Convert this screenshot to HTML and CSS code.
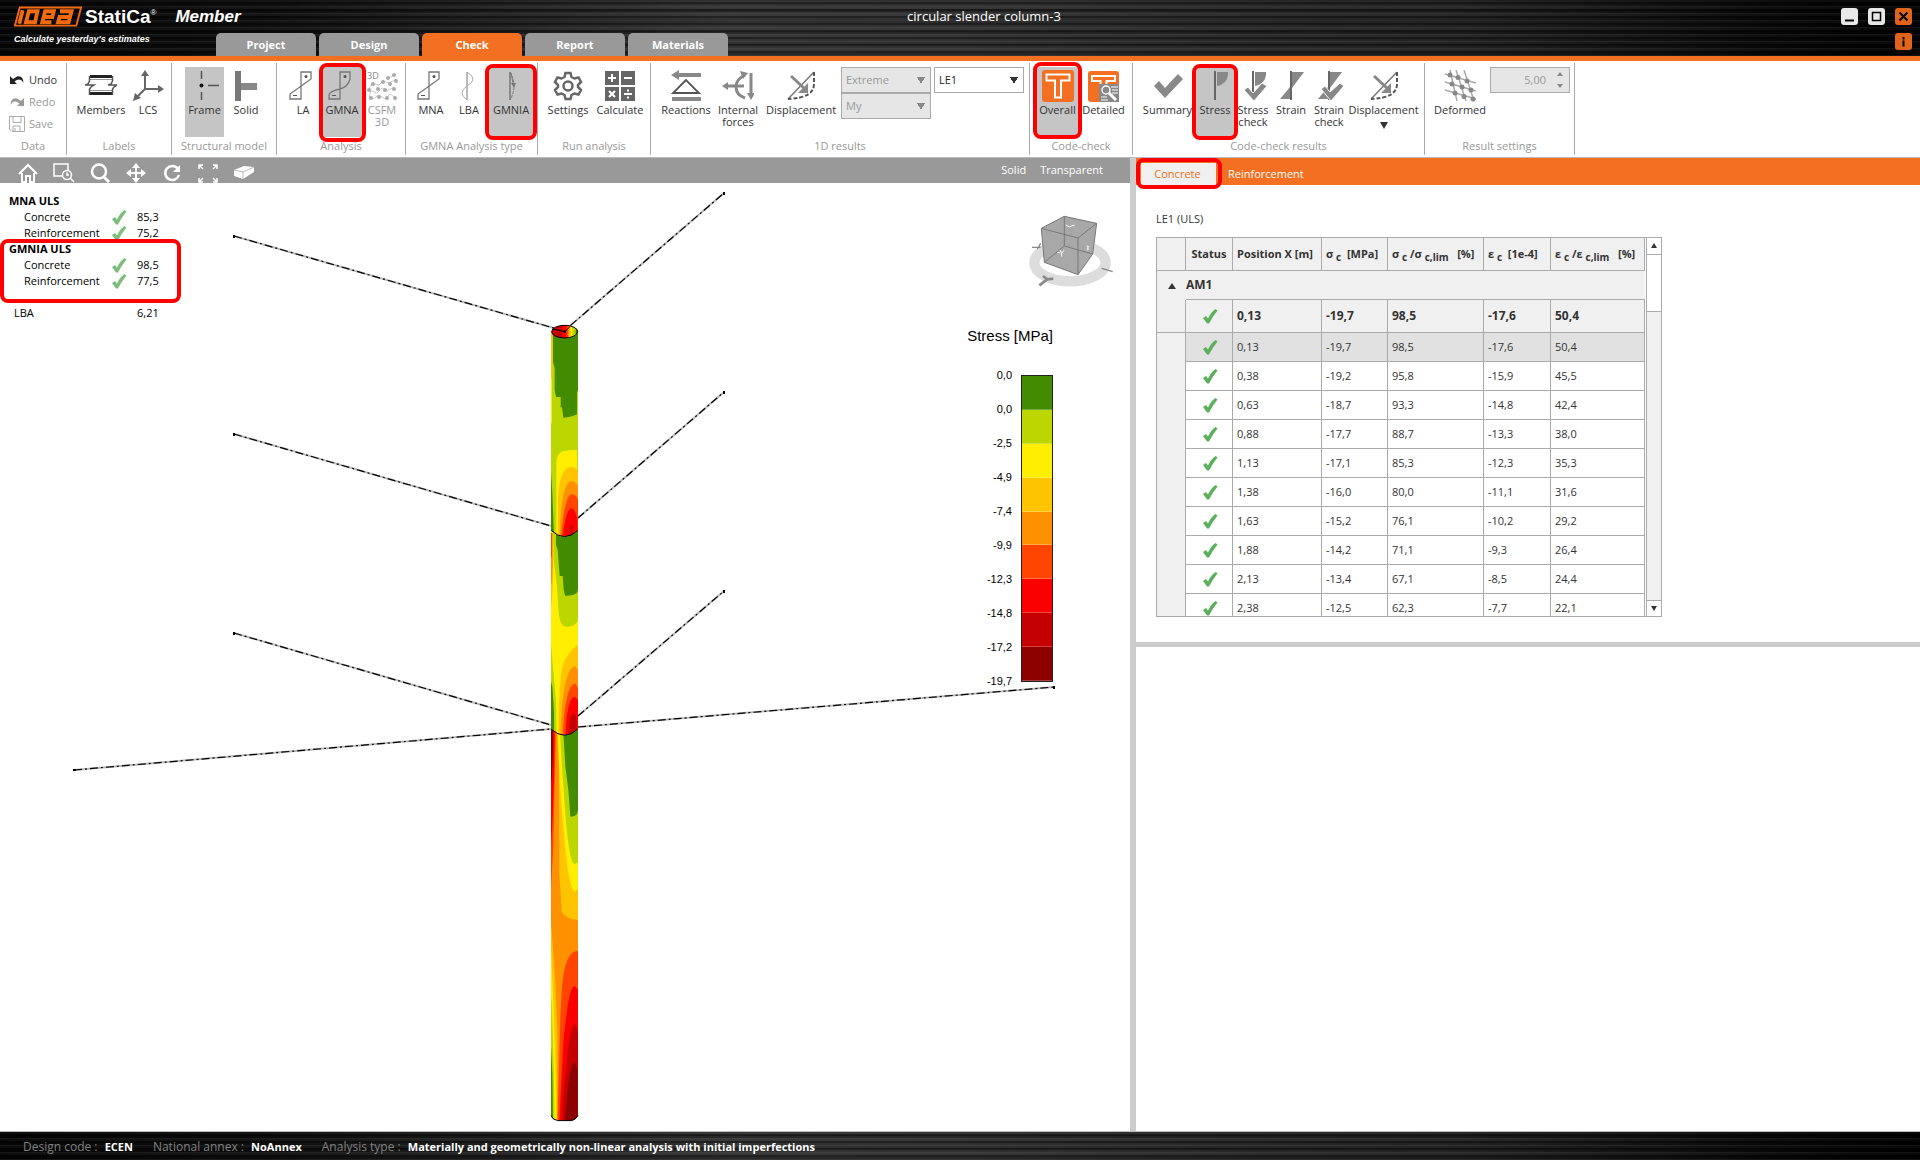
FILE: index.html
```html
<!DOCTYPE html>
<html lang="en">
<head>
<meta charset="utf-8">
<title>IDEA StatiCa Member - circular slender column-3</title>
<link rel="stylesheet" href="styles.css">
</head>
<body>
<svg class="defs" aria-hidden="true">
  <symbol id="tick" viewBox="0 0 16 16"><path d="M1 10 L4 8 L6 10.500 Q9 4 13.500 1 L15.500 2.500 Q11 8 7 15.500 L5 15.500 Z" fill="#5cb05c"/></symbol>
  <symbol id="linear" viewBox="0 0 32 32"><path d="M14 2H24V9L3 24V29H14Z" fill="none" stroke="#777" stroke-width="1.300"/><circle cx="19" cy="6.500" r="1.500" fill="#555"/><path d="M6 25.500h4" stroke="#555"/></symbol>
  <symbol id="disp" viewBox="0 0 32 32"><path d="M3 29 29 2" stroke="#777" stroke-width="1.500"/><path d="M29 2V14Q29 28 3 29" fill="none" stroke="#555" stroke-width="2" stroke-dasharray="4 2"/><path d="M6 6 21 20" stroke="#888" stroke-width="3"/><path d="M23 13v10H13z" fill="#888"/></symbol>
  <symbol id="stress" viewBox="0 0 32 32"><path d="M16 1v29" stroke="#666" stroke-width="2"/><path d="M18 2H29V5Q28 14 18 16Z" fill="#888"/></symbol>
  <symbol id="strain" viewBox="0 0 32 32"><path d="M16 1v29" stroke="#666" stroke-width="2"/><path d="M17 2H29L17 18ZM5 29H15V17Z" fill="#888"/></symbol>
</svg>

<header class="titlebar">
  <div class="brand">
    <div class="brand-line">
      <svg class="logo" width="72" height="22" viewBox="0 0 72 22" role="img" aria-label="IDEA">
        <path d="M6 1H70L65 20H1Z" fill="none" stroke="#f26a10" stroke-width="2"/>
        <g fill="none" stroke="#f26a10" stroke-width="4"><path d="M9 4 5.500 18"/><path d="M12.500 16.500 15.500 5H24.500L22 16.500Z"/><path d="M30 11H40L41.500 5H32.500L29.500 16.500H39"/><path d="M48 5H60L57 16.500H46L47.500 11H58"/></g>
      </svg>
      <span class="brand-name">StatiCa<sup>®</sup></span>
      <span class="brand-app">Member</span>
    </div>
    <div class="tagline">Calculate yesterday's estimates</div>
  </div>
  <nav class="tabs">
    <button class="tab">Project</button>
    <button class="tab">Design</button>
    <button class="tab active">Check</button>
    <button class="tab">Report</button>
    <button class="tab">Materials</button>
  </nav>
  <h1 class="doc-title">circular slender column-3</h1>
  <div class="window-buttons">
    <button class="win" aria-label="Minimize"><svg width="17" height="17"><path d="M4 12.500h9" stroke="#000" stroke-width="2"/></svg></button>
    <button class="win" aria-label="Maximize"><svg width="17" height="17"><path d="M4.500 4.500h8v8h-8z" fill="none" stroke="#000" stroke-width="1.500"/></svg></button>
    <button class="win orange" aria-label="Close"><svg width="17" height="17"><path d="m4.500 4.500 8 8m0-8-8 8" stroke="#000" stroke-width="2"/></svg></button>
    <button class="win orange info" aria-label="Info"><svg width="17" height="17"><path d="M8.500 4v2.500M8.500 7.500v6" stroke="#000" stroke-width="2"/></svg></button>
  </div>
</header>

<section class="ribbon">
  <div class="group g-data">
    <div class="stack">
      <button class="cmd"><svg width="16" height="14"><path d="M1 3v8h7L5.500 8.500Q11 4 14.500 10Q14 2 8 3.500L4 6Z" fill="#222"/></svg>Undo</button>
      <button class="cmd off" disabled><svg width="16" height="14"><path d="M15 3v8H8l2.500-2.500Q5 4 1.500 10Q2 2 8 3.500L12 6Z" fill="#999"/></svg>Redo</button>
      <button class="cmd off" disabled><svg width="16" height="16"><path d="M.5.5h15v15H3l-2.500-2.500zM4 .5v6h8v-6M4 15v-5h7v5M6 12v3" fill="none" stroke="#aaa"/></svg>Save</button>
    </div>
    <h2>Data</h2>
  </div>
  <div class="group g-labels">
    <div class="row">
      <button class="tool"><svg width="32" height="32"><path d="M5 6.500h22M5 23.500h22" stroke="#222" stroke-width="3"/><path d="M5 9.500h22M5 20.500h22" stroke="#999"/><path d="M4.500 6v5l-1.500 3-3 1h9l-3 2-1.500 2v6M27.500 6v5l-1.500 3-3 1h9l-3 2-1.500 2v6" fill="none" stroke="#555" stroke-width="1.500"/></svg><span>Members</span></button>
      <button class="tool"><svg width="32" height="32"><path d="M13 3v16h15M13 19 3 29" fill="none" stroke="#666" stroke-width="2"/><path d="M13 0l-4 6h8zM32 19l-6-4v8zM1 31l2-8 6 5z" fill="#666"/></svg><span>LCS</span></button>
    </div>
    <h2>Labels</h2>
  </div>
  <div class="group g-model">
    <div class="row">
      <button class="tool on"><svg width="32" height="32"><path d="M12.500 1v8M12.500 22v8M19 15.500h11" stroke="#555" stroke-width="1.500"/><circle cx="12.500" cy="15.500" r="2" fill="#111"/></svg><span>Frame</span></button>
      <button class="tool"><svg width="32" height="32"><path d="M5 1h6v30H5z" fill="#777"/><path d="M11 13h16v7H11z" fill="#888"/></svg><span>Solid</span></button>
    </div>
    <h2>Structural model</h2>
  </div>
  <div class="group g-analysis">
    <div class="row">
      <button class="tool"><svg width="32" height="32"><use href="#linear"/></svg><span>LA</span></button>
      <button class="tool on marked mark-a"><svg width="32" height="32"><path d="M14 2H24V9Q22 17 14 19Q4 21 3 25V29H14Z" fill="none" stroke="#777" stroke-width="1.300"/><circle cx="19" cy="6.500" r="1.500" fill="#555"/><path d="M6 25.500h4" stroke="#555"/></svg><span>GMNA</span></button>
      <button class="tool off" disabled><svg width="32" height="32"><text x="1" y="9" class="icon-text">3D</text><path d="M21 9l7-4M3 18l4-4 6 1 4-4 6 2 6-3M3 27l2-6 6 2 5-5 5 3 7-4M7 29l6-4 6 4 5-5 6 4" fill="none" stroke="#ccc"/><g fill="#aaa"><circle cx="22" cy="8" r="2"/><circle cx="28" cy="5" r="2"/><circle cx="7" cy="14" r="2"/><circle cx="17" cy="12" r="2"/><circle cx="24" cy="14" r="2"/><circle cx="30" cy="11" r="2"/><circle cx="3" cy="20" r="2"/><circle cx="12" cy="19" r="2"/><circle cx="19" cy="20" r="2"/><circle cx="28" cy="19" r="2"/><circle cx="5" cy="28" r="2"/><circle cx="13" cy="27" r="2"/><circle cx="21" cy="28" r="2"/><circle cx="29" cy="28" r="2"/></g></svg><span>CSFM<br>3D</span></button>
    </div>
    <h2>Analysis</h2>
  </div>
  <div class="group g-gmna">
    <div class="row">
      <button class="tool"><svg width="32" height="32"><use href="#linear"/></svg><span>MNA</span></button>
      <button class="tool"><svg width="32" height="32"><path d="M14 2v28" stroke="#777"/><path d="M14 2Q26 9 14 16Q4 23 14 30" fill="none" stroke="#aaa"/></svg><span>LBA</span></button>
      <button class="tool on marked mark-b"><svg width="32" height="32"><path d="M15 2v28" stroke="#777" stroke-width="1.500"/><path d="M15 2Q23 16 15 30" fill="none" stroke="#777" stroke-dasharray="3 1"/><path d="M16 3l2 10" stroke="#777"/><path d="M16 13h5l-2 5z" fill="#777"/></svg><span>GMNIA</span></button>
    </div>
    <h2>GMNA Analysis type</h2>
  </div>
  <div class="group g-run">
    <div class="row">
      <button class="tool"><svg width="32" height="32" fill="none" stroke="#666" stroke-width="2.500"><path d="M13.500 3h5l1 4 3 1.500 4-1 2.500 4.500-3 3v2l3 3-2.500 4.500-4-1-3 1.500-1 4h-5l-1-4-3-1.500-4 1L3 20l3-3v-2l-3-3 2.500-4.500 4 1 3-1.500z"/><circle cx="16" cy="16" r="4.500"/></svg><span>Settings</span></button>
      <button class="tool"><svg width="32" height="32"><path d="M1 1h14v14H1zM17 1h14v14H17zM1 17h14v14H1zM17 17h14v14H17z" fill="#666"/><path d="M4 8h8M8 4v8M20 8h8M5 21l6 6m0-6-6 6M20 24h8" stroke="#fff" stroke-width="2"/><path d="M23 19.500h2v2h-2zM23 26.500h2v2h-2z" fill="#fff"/></svg><span>Calculate</span></button>
    </div>
    <h2>Run analysis</h2>
  </div>
  <div class="group g-1d">
    <div class="row">
      <button class="tool"><svg width="32" height="32"><path d="M1 5l8-5v3h22v4H9v3zM2 27h29v4H2z" fill="#888"/><path d="M16 10 3 23h26z" fill="none" stroke="#555" stroke-width="1.800"/></svg><span>Reactions</span></button>
      <button class="tool"><svg width="32" height="32"><path d="M5 16h17M29 3v23" stroke="#888" stroke-width="3"/><path d="M23 5Q14 9 14 17Q14 25 23 28" fill="none" stroke="#888" stroke-width="3"/><path d="M0 16l6-4v8zM26 3l-8-2 3 8zM29 30l-4-7h8z" fill="#888"/></svg><span>Internal<br>forces</span></button>
      <button class="tool"><svg width="32" height="32"><use href="#disp"/></svg><span>Displacement</span></button>
      <div class="selects">
        <select aria-label="Result position" disabled><option>Extreme</option></select>
        <select aria-label="Result component" disabled><option>My</option></select>
      </div>
      <div class="selects"><select aria-label="Load case"><option>LE1</option></select></div>
    </div>
    <h2>1D results</h2>
  </div>
  <div class="group g-code">
    <div class="row">
      <button class="tool on marked mark-c"><svg width="34" height="32"><rect x="1" width="32" height="32" rx="3" fill="#f36f21"/><path d="M5.500 4.500h23v6h-8.500v17h-6v-17H5.500z" fill="none" stroke="#fff" stroke-width="2"/></svg><span>Overall</span></button>
      <button class="tool"><svg width="34" height="32"><rect x="1" y="1" width="31" height="31" rx="3" fill="#f36f21"/><path d="M5 6h23v5H19.500v16h-6V11H5z" fill="none" stroke="#fff" stroke-width="2"/><path d="M12 14h20v18H12z" fill="#888"/><path d="M24 17h7M25 20h6M25 23h6M14 27h6M14 30h7" stroke="#fff"/><circle cx="19" cy="20" r="4" fill="none" stroke="#fff" stroke-width="1.500"/><path d="M22 23l7 7" stroke="#fff" stroke-width="3"/></svg><span>Detailed</span></button>
    </div>
    <h2>Code-check</h2>
  </div>
  <div class="group g-results">
    <div class="row">
      <button class="tool"><svg width="32" height="32"><path d="M2 16l5-5 6 7L26 4l5 5L13 28z" fill="#888"/></svg><span>Summary</span></button>
      <button class="tool on marked mark-d"><svg width="32" height="32"><use href="#stress"/></svg><span>Stress</span></button>
      <button class="tool"><svg width="32" height="32"><use href="#stress"/><path d="M7 20l4-3 5 6L25 13l5 3L17 31z" fill="#888" stroke="#fff"/></svg><span>Stress<br>check</span></button>
      <button class="tool"><svg width="32" height="32"><use href="#strain"/></svg><span>Strain</span></button>
      <button class="tool"><svg width="32" height="32"><use href="#strain"/><path d="M8 19l4-3 5 6L27 13l4 3L18 31z" fill="#888" stroke="#fff"/></svg><span>Strain<br>check</span></button>
      <button class="tool"><svg width="32" height="32"><use href="#disp"/></svg><span>Displacement</span><svg class="more" width="8" height="7"><path d="M0 0h8L4 7z" fill="#333"/></svg></button>
    </div>
    <h2>Code-check results</h2>
  </div>
  <div class="group g-settings">
    <div class="row">
      <button class="tool"><svg width="34" height="32"><path d="M2 4 33 13M2 12 33 21M2 20 33 29M7 0 14 31M13 0 23 31M21 0 31 31" stroke="#aaa" stroke-width="1.500"/><g fill="#888"><circle cx="7" cy="5" r="2.500"/><circle cx="15" cy="7.500" r="2.500"/><circle cx="24" cy="11" r="2.500"/><circle cx="9" cy="14" r="2.500"/><circle cx="19" cy="17" r="2.500"/><circle cx="28" cy="20" r="2.500"/><circle cx="12" cy="23" r="2.500"/><circle cx="21" cy="26.500" r="2.500"/><circle cx="30" cy="29" r="2.500"/></g></svg><span>Deformed</span></button>
      <div class="spin"><input type="text" aria-label="Deformation scale" value="5,00" disabled><svg width="8" height="20"><path d="M1 6 4 2l3 4zM1 14h6l-3 4z" fill="#888"/></svg></div>
    </div>
    <h2>Result settings</h2>
  </div>
</section>

<main class="work">
  <section class="view">
    <div class="viewbar">
      <button aria-label="Home"><svg width="22" height="20" fill="none" stroke="#fff" stroke-width="2"><path d="M2 11 11 2l9 9M5 10v9h4v-6h4v6h4v-9"/></svg></button>
      <button aria-label="Zoom window"><svg width="22" height="20" fill="none" stroke="#fff"><path d="M9 13H1V1h14v6" stroke-width="1.500"/><circle cx="14" cy="12" r="4.500" stroke-width="1.500"/><path d="M14 9.500V12h2M17 15l4 4" stroke-width="1.500"/></svg></button>
      <button aria-label="Zoom"><svg width="22" height="20" fill="none" stroke="#fff"><circle cx="10" cy="8.500" r="7" stroke-width="2.500"/><path d="m15 14 5 5" stroke-width="3"/></svg></button>
      <button aria-label="Pan"><svg width="22" height="20"><path d="M11 2v16M3 10h16" stroke="#fff" stroke-width="2"/><path d="m11 0-4 5h8zm0 20-4-5h8zM1 10l5-4v8zm20 0-5-4v8z" fill="#fff"/></svg></button>
      <button aria-label="Rotate"><svg width="22" height="20"><path d="M17 6a7 7 0 1 0 1 6" fill="none" stroke="#fff" stroke-width="2.500"/><path d="M19 2v7h-7z" fill="#fff"/></svg></button>
      <button aria-label="Fit"><svg width="22" height="20" fill="none" stroke="#fff" stroke-width="1.500"><path d="M6 2H2v4M2 2l4 4M16 2h4v4m0-4-4 4M6 19H2v-4m0 4 4-4M16 19h4v-4m0 4-4-4"/></svg></button>
      <button aria-label="Perspective"><svg width="22" height="20"><path d="M1 7 11 3l10 1v5L10 16 1 13z" fill="#fff"/><path d="m1 7 9 2 11-5M10 9v7" fill="none" stroke="#bbb"/></svg></button>
      <button class="text-btn first">Solid</button>
      <button class="text-btn">Transparent</button>
    </div>
    <div class="scene">
      <svg class="model" viewBox="0 183 1130 948" preserveAspectRatio="xMinYMin slice" role="img" aria-label="Stress on the deformed member">
        <path d="M234 236 564 331 724 193M234 434 551 526M578 518 724 392M234 633 551 725M578 716 724 591M74 770 551 729M578 727 1054 687" fill="none" stroke="#bbb" stroke-width="2"/>
        <path d="M234 236 564 331 724 193M234 434 551 526M578 518 724 392M234 633 551 725M578 716 724 591M74 770 551 729M578 727 1054 687" fill="none" stroke="#000" stroke-width="1.200" stroke-dasharray="8 3 2 3"/>
        <path d="M233 235h2v3h-2zM723 192h2v3h-2zM233 433h2v3h-2zM723 391h2v3h-2zM233 632h2v3h-2zM723 590h2v3h-2zM73 769h3v2h-3zM1053 686h2v3h-2z"/>
        <clipPath id="c1"><path d="M93 95H174V692Q134 728 93 692Z"/></clipPath>
        <clipPath id="c2"><path d="M93 692Q134 728 174 692V1288Q134 1324 93 1288Z"/></clipPath>
        <clipPath id="c3"><path d="M93 88Q134 124 174 88V1247L165 1258 155 1262H113L100 1257 93 1247Z"/></clipPath>
        <g transform="translate(520 300) scale(.3333)">
          <g clip-path="url(#c1)">
            <path fill="#bcd600" d="M93 80H174V730H93Z"/>
            <path fill="#438c00" d="M99 100V185L104 205V270L108 291H122V322H126L130 353Q155 352 171 343V275L174 272V95Z"/>
            <path fill="#ffc400" d="M93 95H98V210L96 250H93Z"/><path fill="#fe0" d="M93 235H96V370H93Z"/>
            <path fill="#fe0" d="M109 730V490Q110 460 128 454 150 449 171 450L174 730Z"/>
            <path fill="#ffc400" d="M114 730V600Q118 500 155 501 171 503 174 515V730Z"/>
            <path fill="#ff9000" d="M118 730Q122 543 155 543 169 545 174 560V730Z"/>
            <path fill="#ff4500" d="M122 730Q132 585 155 582 169 584 174 600V730Z"/>
            <path fill="#fa0000" d="M127 730Q135 630 154 625 166 626 172 660V730Z"/>
            <path fill="#c40000" d="M147 710 150 678H158L161 710Z"/>
            <path fill="#438c00" d="M93 515 97 580 102 710H93Z"/>
          </g>
          <g clip-path="url(#c2)">
            <path fill="#fe0" d="M93 680H174V1330H93Z"/>
            <path fill="#bcd600" d="M99 680 101 780 111 860 116 940Q120 976 135 980 165 983 174 960V680Z"/>
            <path fill="#438c00" d="M108 690V735L113 750 119 828H128L131 868 135 887Q160 888 171 878L174 870V680Z"/>
            <path fill="#ffc400" d="M93 700H99V840L95 915H93Z"/><path fill="#ff9000" d="M93 700H98V800L95 850H93Z"/><path fill="#ff4500" d="M93 700H96V770H93Z"/>
            <path fill="#ffc400" d="M115 1330Q116 1100 135 1080 150 1050 174 1034V1330Z"/>
            <path fill="#ff9000" d="M121 1330Q124 1110 165 1098L174 1110V1330Z"/>
            <path fill="#ff4500" d="M127 1330Q134 1155 165 1150L174 1165V1330Z"/>
            <path fill="#fa0000" d="M135 1330Q139 1190 165 1190L174 1200V1330Z"/>
            <path fill="#c40000" d="M144 1330Q146 1240 162 1240 170 1250 170 1290V1330Z"/>
            <path fill="#bcd600" d="M93 1030 97 1080 108 1200 110 1330H93Z"/><path fill="#438c00" d="M93 1145 97 1160 102 1240V1330H93Z"/>
          </g>
          <g transform="translate(0 1200)"><g clip-path="url(#c3)">
            <path fill="#ff9000" d="M93 70H174V1280H93Z"/>
            <path fill="#ffc400" d="M110 80 117 200 118 520 125 635Q140 660 174 660V80Z"/>
            <path fill="#fe0" d="M113 80 119 250 137 460Q150 575 165 575L174 565V80Z"/>
            <path fill="#bcd600" d="M119 80 126 200 135 330Q148 492 163 492L174 488V80Z"/>
            <path fill="#438c00" d="M129 80 136 200 145 270 151 350Q164 351 171 342L174 330V80Z"/>
            <path fill="#ff4500" d="M93 80H108L104 240 100 440 93 565Z"/>
            <path fill="#fa0000" d="M93 80H104L102 240 97 370 93 435Z"/>
            <path fill="#8c0000" d="M93 80H99V150L95 240H93Z"/>
            <path fill="#ffc400" d="M93 670 97 720 106 850 112 1000V1280H93Z"/>
            <path fill="#fe0" d="M93 740 99 880 106 1080 110 1280H93Z"/>
            <path fill="#bcd600" d="M93 880 97 960 101 1100 104 1280H93Z"/>
            <path fill="#438c00" d="M93 1040 97 1120 99 1280H93Z"/>
            <path fill="#ff4500" d="M112 1280 121 950 126 860Q136 755 170 753H174V1280Z"/>
            <path fill="#fa0000" d="M117 1280 131 1010 140 940Q150 858 165 858L174 870V1280Z"/>
            <path fill="#c40000" d="M125 1280 131 1170 145 1040Q155 972 165 972L174 990V1280Z"/>
            <path fill="#8c0000" d="M133 1280 143 1160Q155 1087 164 1087L173 1110V1280Z"/>
          </g><path d="M93 1247 100 1257 113 1262H155L165 1258 174 1247" fill="none" stroke="#000" stroke-width="3"/></g>
          <clipPath id="top"><ellipse cx="134" cy="95" rx="39" ry="19"/></clipPath>
          <g clip-path="url(#top)"><path fill="#c40000" d="M93 70h81v50H93z"/><path fill="#fa0000" d="M126 70h48v50h-48z"/><path fill="#ff4500" d="M139 70h35v50h-35z"/><path fill="#ff9000" d="M144 70h30v50h-30z"/><path fill="#ffc400" d="M148 70h26v50h-26z"/><path fill="#fe0" d="M152 70h22v50h-22z"/><path fill="#bcd600" d="M157 70h17v50h-17z"/><path fill="#438c00" d="M167 70h7v50h-7z"/></g>
          <path d="M94 692Q134 728 173 692M94 1288Q134 1324 173 1288M100 87 134 95 150 80" fill="none" stroke="#000" stroke-width="3"/><circle cx="134" cy="95" r="4"/>
          <ellipse cx="134" cy="95" rx="39" ry="19" fill="none" stroke="#000" stroke-width="3"/>
        </g>
        <g transform="translate(1010 200) scale(.3333)">
          <ellipse cx="180" cy="188" rx="107" ry="56" fill="none" stroke="#ddd" stroke-width="31"/>
          <path d="M94 85 163 49 260 70 248 162 204 224 103 187Z" fill="#a8a8a8"/>
          <path d="M94 85 163 49 260 70 204 114ZM204 114V224M94 85 103 187 204 224 248 162 260 70M163 49V138L103 187M163 138 248 162" fill="none" stroke="#777" stroke-width="3"/>
          <path d="M66 142H92M82 147 92 130M275 205 308 215" stroke="#888" stroke-width="4" fill="none"/>
          <path d="M88 256 112 238 99 228M112 238 130 236" stroke="#888" stroke-width="8" fill="none"/>
          <path d="M168 75l10 6 8-4 8-1M142 158h7M150 150l5 10 7-9M155 160v10M230 138l6 2-4 5 4 2-6 4" fill="none" stroke="#fff" stroke-width="3"/>
        </g>
      </svg>
      <div class="summary">
        <h3>MNA ULS</h3>
        <dl><dt>Concrete</dt><dd><svg width="16" height="16"><use href="#tick"/></svg>85,3</dd><dt>Reinforcement</dt><dd><svg width="16" height="16"><use href="#tick"/></svg>75,2</dd></dl>
        <div class="boxed">
          <h3>GMNIA ULS</h3>
          <dl><dt>Concrete</dt><dd><svg width="16" height="16"><use href="#tick"/></svg>98,5</dd><dt>Reinforcement</dt><dd><svg width="16" height="16"><use href="#tick"/></svg>77,5</dd></dl>
        </div>
        <dl class="lba"><dt>LBA</dt><dd>6,21</dd></dl>
      </div>
      <div class="legend">
        <h3>Stress [MPa]</h3>
        <div class="scale">
          <ol class="ticks"><li>0,0</li><li>0,0</li><li>-2,5</li><li>-4,9</li><li>-7,4</li><li>-9,9</li><li>-12,3</li><li>-14,8</li><li>-17,2</li><li>-19,7</li></ol>
          <div class="swatches"><i class="s1"></i><i class="s2"></i><i class="s3"></i><i class="s4"></i><i class="s5"></i><i class="s6"></i><i class="s7"></i><i class="s8"></i><i class="s9"></i></div>
        </div>
      </div>
    </div>
  </section>
  <section class="details">
    <div class="result-pane">
      <nav class="subtabs">
        <button class="subtab current marked mark-e">Concrete</button>
        <button class="subtab">Reinforcement</button>
      </nav>
      <h3 class="case">LE1 (ULS)</h3>
      <div class="grid">
        <div class="grid-body">
        <table>
          <colgroup><col class="k0"><col class="k1"><col class="k2"><col class="k3"><col class="k4"><col class="k5"><col class="k6"></colgroup>
          <thead><tr><th></th><th>Status</th><th>Position X [m]</th><th>σ <sub>c</sub>&nbsp; [MPa]</th><th>σ <sub>c</sub> /σ <sub>c,lim</sub> &nbsp; [%]</th><th>ε <sub>c</sub>&nbsp; [1e-4]</th><th>ε <sub>c</sub> /ε <sub>c,lim</sub> &nbsp; [%]</th></tr></thead>
          <tbody>
            <tr class="member"><td><svg class="caret" width="8" height="6"><path d="M0 6 4 0l4 6z" fill="#333"/></svg></td><th colspan="6">AM1</th></tr>
            <tr class="extreme"><td></td><td><svg><use href="#tick"/></svg></td><td>0,13</td><td>-19,7</td><td>98,5</td><td>-17,6</td><td>50,4</td></tr>
            <tr class="selected"><td rowspan="10"></td><td><svg><use href="#tick"/></svg></td><td>0,13</td><td>-19,7</td><td>98,5</td><td>-17,6</td><td>50,4</td></tr>
            <tr><td><svg><use href="#tick"/></svg></td><td>0,38</td><td>-19,2</td><td>95,8</td><td>-15,9</td><td>45,5</td></tr>
            <tr><td><svg><use href="#tick"/></svg></td><td>0,63</td><td>-18,7</td><td>93,3</td><td>-14,8</td><td>42,4</td></tr>
            <tr><td><svg><use href="#tick"/></svg></td><td>0,88</td><td>-17,7</td><td>88,7</td><td>-13,3</td><td>38,0</td></tr>
            <tr><td><svg><use href="#tick"/></svg></td><td>1,13</td><td>-17,1</td><td>85,3</td><td>-12,3</td><td>35,3</td></tr>
            <tr><td><svg><use href="#tick"/></svg></td><td>1,38</td><td>-16,0</td><td>80,0</td><td>-11,1</td><td>31,6</td></tr>
            <tr><td><svg><use href="#tick"/></svg></td><td>1,63</td><td>-15,2</td><td>76,1</td><td>-10,2</td><td>29,2</td></tr>
            <tr><td><svg><use href="#tick"/></svg></td><td>1,88</td><td>-14,2</td><td>71,1</td><td>-9,3</td><td>26,4</td></tr>
            <tr><td><svg><use href="#tick"/></svg></td><td>2,13</td><td>-13,4</td><td>67,1</td><td>-8,5</td><td>24,4</td></tr>
            <tr><td><svg><use href="#tick"/></svg></td><td>2,38</td><td>-12,5</td><td>62,3</td><td>-7,7</td><td>22,1</td></tr>
          </tbody>
        </table>
        </div>
        <div class="scroll"><button aria-label="Scroll up"><svg width="8" height="6"><path d="M1 5 4 0l3 5z" fill="#333"/></svg></button><span class="thumb"></span><button aria-label="Scroll down"><svg width="8" height="6"><path d="M1 0h6L4 5z" fill="#333"/></svg></button></div>
      </div>
    </div>
    <div class="lower"></div>
  </section>
</main>

<footer class="status">
  <span>Design code : <b>ECEN</b></span>
  <span>National annex : <b>NoAnnex</b></span>
  <span>Analysis type : <b>Materially and geometrically non-linear analysis with initial imperfections</b></span>
</footer>
</body>
</html>
```
FILE: styles.css
```css
* { box-sizing: border-box; }
body {
  margin: 0;
  min-height: 100vh;
  display: flex;
  flex-direction: column;
  background: #fff;
  color: #333;
  font: 11px/16px "Open Sans", "Noto Sans", sans-serif;
}
h1, h2, h3, dl, dd, ol { margin: 0; padding: 0; font-weight: 400; font-size: inherit; }
button { border: 0; padding: 0; background: none; color: inherit; font: inherit; }
svg { display: block; }
.defs { position: absolute; width: 0; height: 0; }

/* brushed metal used by the title and status bars */
.titlebar, .status {
  background:
    repeating-linear-gradient(0deg, rgba(255,255,255,.07) 0 1px, transparent 1px 3px, rgba(0,0,0,.35) 3px 5px, rgba(255,255,255,.03) 5px 7px),
    repeating-linear-gradient(0deg, rgba(0,0,0,.2) 0 3px, transparent 3px 11px),
    linear-gradient(90deg, #050505 0, #0e0e0e 14%, #333 38%, #303030 50%, #262626 66%, #222 76%, #080808 92%, #000 100%);
}
.titlebar {
  display: grid;
  grid-template-columns: 216px 1fr auto;
  height: 61px;
  border-bottom: 5px solid #f36f21;
  color: #fff;
  position: relative;
}
.brand { padding: 5px 0 0 14px; white-space: nowrap; }
.brand-line { display: flex; align-items: center; height: 24px; }
.logo { width: 69px; flex: none; }
.brand-name, .brand-app { font: bold 19px/24px "Liberation Sans", sans-serif; padding-left: 2px; }
.brand-name sup { font-size: 8px; line-height: 0; vertical-align: 8px; font-weight: 400; }
.brand-app { font-style: italic; padding-left: 19px; font-size: 17px; }
.tagline { font: italic bold 9px/20px "Liberation Sans", sans-serif; }
.tabs { display: flex; gap: 3px; align-self: end; z-index: 1; }
.tab {
  width: 100px; height: 23px; border-radius: 5px 5px 0 0;
  background: #999; color: #fff; font-weight: 700;
}
.tab.active { background: #f36f21; }
.doc-title { position: absolute; left: 0; right: 0; top: 8px; margin-left: 48px; text-align: center; font-size: 13px; line-height: 16px; }
.window-buttons { display: grid; grid-template-columns: repeat(3, 17px); gap: 8px 10px; padding: 8px 8px 0 0; align-content: start; z-index: 1; }
.win { height: 17px; border-radius: 3px; background: #e8e8e8; }
.win.orange { background: #e0641c; }
.win.info { grid-column: 3; }

.ribbon { display: flex; height: 97px; padding-top: 2px; border-bottom: 1px solid #bbb; }
.group { display: flex; flex-direction: column; flex: none; height: 92px; border-right: 1px solid #aaa; }
.group h2 { margin-top: auto; text-align: center; color: #999; padding-bottom: 1px; }
.row { display: grid; padding: 4px 0 0 6px; align-items: start; }
.g-data { width: 67px; }
.g-labels { width: 105px; } .g-labels .row { grid-template-columns: 60px 34px; padding-left: 4px; }
.g-model { width: 105px; } .g-model .row { grid-template-columns: 39px 38px; gap: 3px; padding-left: 13px; }
.g-analysis { width: 129px; } .g-analysis .row { grid-template-columns: 38px 40px 40px; padding-left: 7px; }
.g-gmna { width: 132px; } .g-gmna .row { grid-template-columns: 38px 38px 46px; }
.g-run { width: 113px; } .g-run .row { grid-template-columns: 48px 56px; }
.g-1d { width: 379px; } .g-1d .row { grid-template-columns: 52px 46px 74px 90px 90px; column-gap: 3px; padding-left: 9px; }
.g-code { width: 103px; } .g-code .row { grid-template-columns: 43px 49px; }
.g-results { width: 292px; } .g-results .row { grid-template-columns: 57px 38px 38px 38px 38px 71px; }
.g-settings { width: 150px; } .g-settings .row { grid-template-columns: 56px 80px; gap: 2px; padding-left: 7px; }

.stack { display: grid; padding: 9px 0 0 9px; gap: 6px; }
.cmd { display: flex; align-items: center; gap: 4px; height: 16px; }
.off { color: #999; }
.tool {
  position: relative; display: flex; flex-direction: column; align-items: center;
  height: 70px; padding-top: 3px; line-height: 12px; white-space: nowrap;
}
.tool svg { flex: none; }
.tool span { margin-top: 2px; }
.tool .more { margin-top: 6px; }
.tool.on { background: #c5c5c5; }
.icon-text { font-size: 9px; fill: #888; }

/* red call-out frames over highlighted controls */
.marked { position: relative; }
.marked::after { content: ""; position: absolute; border: 4px solid #f00; border-radius: 8px; z-index: 2; }
.mark-a::after { inset: -4px -4px -5px -3px; }
.mark-b::after { inset: -3px; }
.mark-c::after { inset: -5px -3px -2px -3px; }
.mark-d::after { inset: -3px -4px; }
.mark-e::after { inset: -5px -6px -4px -5px; }

.selects { display: grid; }
select, .spin { width: 100%; height: 26px; border: 1px solid #aaa; }
select {
  display: block; appearance: none; padding: 0 4px; border-radius: 0; color: #222; opacity: 1;
  font: 11px/16px "Open Sans", sans-serif;
  background: #fff conic-gradient(from -30deg at 50% 100%, #333 60deg, transparent 0) no-repeat right 5px center / 7px 6px;
}
select {
  background-image: linear-gradient(to top right, transparent 50%, #333 51%), linear-gradient(to top left, transparent 50%, #333 51%);
  background-size: 4px 7px; background-position: right 5px center, right 9px center;
}
select:disabled {
  background-color: #e6e6e6; color: #999;
  background-image: linear-gradient(to top right, transparent 50%, #888 51%), linear-gradient(to top left, transparent 50%, #888 51%);
}
select { background-image: linear-gradient(to bottom right, #333 50%, transparent 51%), linear-gradient(to bottom left, #333 50%, transparent 51%); }
select:disabled { background-image: linear-gradient(to bottom right, #888 50%, transparent 51%), linear-gradient(to bottom left, #888 50%, transparent 51%); }
.spin { display: flex; align-items: center; background: #e6e6e6; padding-right: 5px; }
.spin input { width: 100%; min-width: 0; border: 0; padding: 0 10px 0 0; background: none; color: #999; font: inherit; text-align: right; }
.spin svg { flex: none; }

.work { flex: 1; display: flex; min-height: 0; }
.view { width: 1136px; flex: 0 1 auto; display: flex; flex-direction: column; border-right: 6px solid #ccc; }
.viewbar { height: 25px; display: flex; align-items: center; gap: 14px; padding: 4px 27px 0 17px; background: #999; color: #fff; }
.text-btn { padding-bottom: 5px; }
.text-btn.first { margin-left: auto; }
.scene { position: relative; flex: 1; min-height: 940px; overflow: hidden; }
.model { position: absolute; left: 0; top: 0; width: 100%; height: 100%; }
.summary { position: relative; width: 181px; padding-top: 10px; color: #000; }
.summary h3 { font-weight: 700; padding-left: 9px; }
.summary dl { display: grid; grid-template-columns: 87px 1fr; padding-left: 24px; }
.summary dd { display: flex; gap: 10px; }
.summary svg { opacity: .8; }
.boxed { position: relative; }
.boxed::after { content: ""; position: absolute; inset: -2px 0 -14px 0; border: 4px solid #f00; border-radius: 8px; }
.summary .lba { grid-template-columns: 123px 1fr; padding: 16px 0 0 14px; }
.legend { position: absolute; right: 77px; top: 144px; color: #000; font-family: "Liberation Sans", sans-serif; }
.legend h3 { font-size: 15px; line-height: 18px; }
.scale { display: flex; justify-content: flex-end; gap: 9px; padding-top: 30px; }
.ticks { list-style: none; text-align: right; margin-top: -17px; }
.ticks li { height: 34px; line-height: 34px; }
.swatches { width: 32px; height: 307px; border: 1px solid #222; display: flex; flex-direction: column; }
.swatches i { flex: 1; border-bottom: 1px solid rgba(255,255,255,.25); }
.s1 { background: #438c00; } .s2 { background: #bcd600; } .s3 { background: #fe0; }
.s4 { background: #ffc400; } .s5 { background: #ff9000; } .s6 { background: #ff4500; }
.s7 { background: #fa0000; } .s8 { background: #c40000; } .s9 { background: #8c0000; }

.details { flex: 1; min-width: 0; display: flex; flex-direction: column; }
.result-pane { height: 489px; border-bottom: 5px solid #ccc; }
.subtabs { display: flex; height: 27px; padding: 5px 0 0 5px; background: #f36f21; color: #fff; }
.subtab { padding: 0 12px; line-height: 22px; }
.subtab.current { width: 75px; padding: 0 2px 0 0; background: #f0f0f0; color: #f36f21; }
.case { padding: 26px 0 10px 20px; }
.grid { display: flex; gap: 1px; width: 506px; height: 380px; margin-left: 20px; border: 1px solid #aaa; }
.grid-body { flex: none; width: 488px; height: 378px; overflow: hidden; }
table { table-layout: fixed; width: 488px; border-collapse: separate; border-spacing: 0; }
.k0 { width: 29px; } .k1 { width: 47px; } .k2 { width: 89px; } .k3 { width: 66px; } .k4 { width: 96px; } .k5 { width: 67px; } .k6 { width: 94px; }
th, td { height: 29px; padding: 0 0 0 4px; border: solid #aaa; border-width: 0 1px 1px 0; text-align: left; white-space: nowrap; }
thead th { height: 33px; background: #f0f0f0; font-weight: 700; }
thead th:nth-child(2) { text-align: center; padding: 0; }
sub { font-size: 10px; line-height: 0; vertical-align: -3px; }
.member td, .member th { background: #f0f0f0; border-right: 0; }
.member td { border-bottom: 0; padding: 0; }
.member th { padding-left: 0; font-size: 12px; }
.extreme td { height: 33px; background: #f0f0f0; font-weight: 700; font-size: 12px; }
.selected td { background: #e1e1e1; }
td[rowspan] { background: #f0f0f0; }
td svg { width: 16px; height: 16px; margin-left: 12px; }
td .caret { width: 8px; height: 6px; margin-left: 11px; }
.scroll { flex: 1; display: flex; flex-direction: column; border-left: 1px solid #aaa; background: #f0f0f0; }
.scroll button { display: grid; place-items: center; height: 16px; background: #fff; }
.scroll button:last-child { margin-top: auto; border-top: 1px solid #aaa; }
.thumb { height: 58px; border: solid #aaa; border-width: 1px 0; background: #fff; }

.status { display: flex; gap: 20px; height: 29px; padding: 2px 0 0 23px; border-top: 1px solid #bbb; color: #808080; font-size: 12px; line-height: 26px; white-space: nowrap; }
.status b { color: #fff; margin-left: 4px; font-weight: 700; font-size: 11px; }
```
